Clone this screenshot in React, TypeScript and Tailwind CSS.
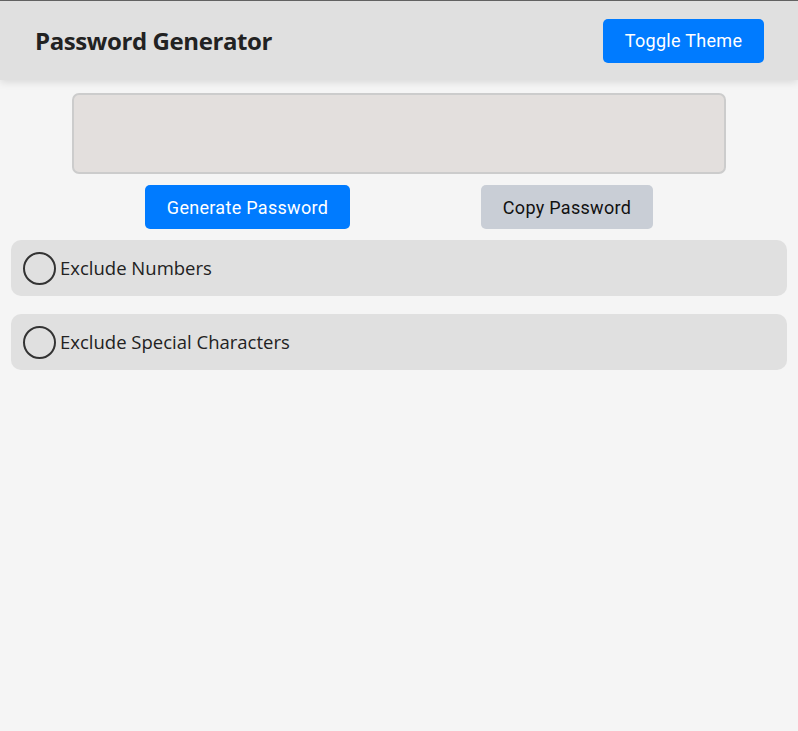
import React, { useState } from 'react'

const OPTIONS = ['Exclude Numbers', 'Exclude Special Characters']

export default function App() {
  const [checked, setChecked] = useState<Record<string, boolean>>({})

  return (
    <div className="min-h-[731px] bg-[#f5f5f5] border-t border-[#666]" style={{ fontFamily: '"Open Sans", sans-serif' }}>
      <header className="h-[79px] bg-[#e0e0e0] flex items-center justify-between pl-[35px] pr-[34px] shadow-[0_2px_8px_rgba(0,0,0,0.12)]">
        <h1 className="text-[24px] font-bold text-[#222] tracking-[-0.4px] mt-[1px]">Password Generator</h1>
        <button className="h-[44px] w-[161px] rounded-[5px] bg-[#007bff] text-white text-[18px] tracking-[0.3px] font-['Roboto',sans-serif]">
          Toggle Theme
        </button>
      </header>

      <div className="mt-[13px] w-[654px] mx-auto">
        <div className="h-[81px] rounded-[7px] border-2 border-[#cccccc] bg-[#e3dfdd]" />
        <div className="mt-[11px] flex justify-between px-[73px] font-['Roboto',sans-serif] text-[18px] tracking-[0.3px]">
          <button className="h-[44px] w-[205px] rounded-[5px] bg-[#007bff] text-white">Generate Password</button>
          <button className="h-[44px] w-[172px] rounded-[5px] bg-[#c9ced6] text-[#111]">Copy Password</button>
        </div>
      </div>

      <div className="mt-[11px] px-[11px] flex flex-col gap-[18px]">
        {OPTIONS.map(o => (
          <label key={o} className="h-[56px] rounded-[10px] bg-[#e0e0e0] flex items-center pl-[12px] gap-[4px] cursor-pointer">
            <span
              onClick={() => setChecked(c => ({ ...c, [o]: !c[o] }))}
              className={`w-[33px] h-[33px] rounded-full border-2 border-[#333] ${checked[o] ? 'bg-[#007bff]' : ''}`}
            />
            <span className="text-[18.5px] text-[#222]">{o}</span>
          </label>
        ))}
      </div>
    </div>
  )
}
